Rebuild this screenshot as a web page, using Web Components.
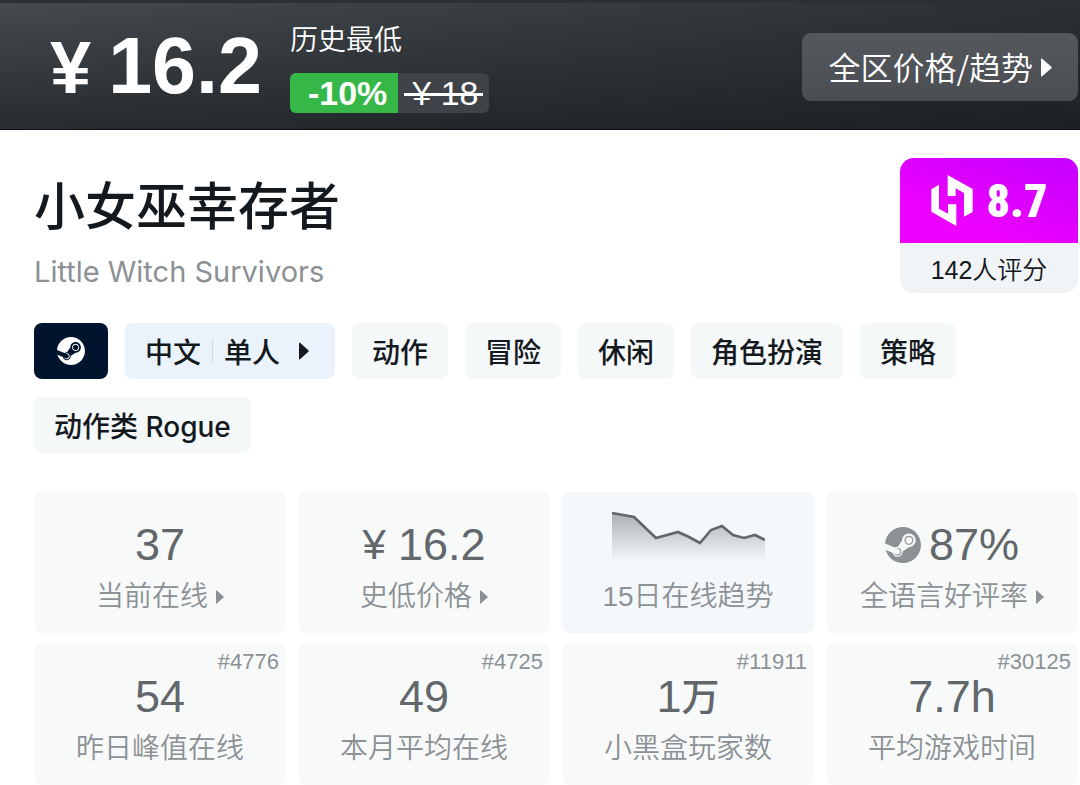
<!DOCTYPE html>
<html lang="zh-CN">
<head>
<meta charset="utf-8">
<meta name="viewport" content="width=device-width, initial-scale=1">
<title>小女巫幸存者</title>
<style>
    body {
        margin: 0;
        background: #fff;
        color: #14191e;
        font-family: "Liberation Sans", "Noto Sans CJK SC", sans-serif;
    }
</style>
</head>
<body>

<game-page>
    <price-bar slot="price" price="16.2" original="18" discount="-10%">历史最低</price-bar>
    <game-title slot="title" subtitle="Little Witch Survivors">小女巫幸存者</game-title>
    <score-badge slot="score" score="8.7">142人评分</score-badge>

    <tag-chip slot="tags" kind="platform" label="Steam"><steam-icon></steam-icon></tag-chip>
    <tag-chip slot="tags" kind="modes"><span>中文</span><i></i><span>单人</span><arrow-right></arrow-right></tag-chip>
    <tag-chip slot="tags">动作</tag-chip>
    <tag-chip slot="tags">冒险</tag-chip>
    <tag-chip slot="tags">休闲</tag-chip>
    <tag-chip slot="tags">角色扮演</tag-chip>
    <tag-chip slot="tags">策略</tag-chip>
    <tag-chip slot="tags">动作类 Rogue</tag-chip>

    <stat-card slot="stats" label="当前在线" more>37</stat-card>
    <stat-card slot="stats" label="史低价格" more><small>¥</small>16.2</stat-card>
    <stat-card slot="stats" label="15日在线趋势" active><spark-line points="0,1 22,5 44,26 66,20 77,25 88,31 99,18 110,14 121,23 132,26 143,23 153,28"></spark-line></stat-card>
    <stat-card slot="stats" label="全语言好评率" more><steam-icon></steam-icon>87%</stat-card>
    <stat-card slot="stats" label="昨日峰值在线" rank="#4776">54</stat-card>
    <stat-card slot="stats" label="本月平均在线" rank="#4725">49</stat-card>
    <stat-card slot="stats" label="小黑盒玩家数" rank="#11911">1<b>万</b></stat-card>
    <stat-card slot="stats" label="平均游戏时间" rank="#30125">7.7h</stat-card>
</game-page>

<script>
/* icons */
class SteamIcon extends HTMLElement {
    constructor() {
        super();
        let shadowRoot = this.attachShadow({mode:'open'});
        shadowRoot.innerHTML = `
        <style>
            :host { display:block; flex:none; width:28px; height:28px; }
            svg { display:block; width:100%; height:100%; fill:currentColor; }
        </style>
        <svg viewBox="0 0 24 24" aria-hidden="true">
            <path d="M11.979 0C5.678 0 .511 4.86.022 11.037l6.432 2.658c.545-.371 1.203-.59 1.912-.59.063 0 .125.004.188.006l2.861-4.142V8.91c0-2.495 2.028-4.524 4.524-4.524 2.494 0 4.524 2.031 4.524 4.527s-2.03 4.525-4.524 4.525h-.105l-4.076 2.911c0 .052.004.105.004.159 0 1.875-1.515 3.396-3.39 3.396-1.635 0-3.016-1.173-3.331-2.727L.436 15.27C1.862 20.307 6.486 24 11.979 24c6.627 0 11.999-5.373 11.999-12S18.605 0 11.979 0zM7.54 18.21l-1.473-.61c.262.543.714.999 1.314 1.25 1.297.539 2.793-.076 3.332-1.375.263-.63.264-1.319.005-1.949s-.75-1.121-1.377-1.383c-.624-.26-1.29-.249-1.878-.03l1.523.63c.956.4 1.409 1.5 1.009 2.455-.397.957-1.497 1.41-2.454 1.012H7.54zm11.415-9.303c0-1.662-1.353-3.015-3.015-3.015-1.665 0-3.015 1.353-3.015 3.015 0 1.665 1.35 3.015 3.015 3.015 1.663 0 3.015-1.35 3.015-3.015zm-5.273-.005c0-1.252 1.013-2.266 2.265-2.266 1.249 0 2.266 1.014 2.266 2.266 0 1.251-1.017 2.265-2.266 2.265-1.253 0-2.265-1.014-2.265-2.265z"/>
        </svg>
        `;
    }
}

class ArrowRight extends HTMLElement {
    constructor() {
        super();
        let shadowRoot = this.attachShadow({mode:'open'});
        shadowRoot.innerHTML = `
        <style>
            :host { display:block; flex:none; width:10px; height:18px; }
            svg { display:block; width:100%; height:100%; fill:currentColor; }
        </style>
        <svg viewBox="0 0 10 18" preserveAspectRatio="none" aria-hidden="true">
            <path d="M0 1.2Q0 0 1 .8L9.4 8.2Q10 9 9.4 9.8L1 17.2Q0 18 0 16.8z"/>
        </svg>
        `;
    }
}

/* small area chart, points are in px */
class SparkLine extends HTMLElement {
    constructor() {
        super();
        let shadowRoot = this.attachShadow({mode:'open'});
        let points = this.getAttribute('points');
        shadowRoot.innerHTML = `
        <style>
            :host { display:block; flex:none; align-self:flex-end; }
            svg { display:block; }
        </style>
        <svg width="153" height="58" viewBox="0 0 153 58" aria-hidden="true">
            <defs>
                <linearGradient id="fade" x1="0" y1="0" x2="0" y2="50" gradientUnits="userSpaceOnUse">
                    <stop offset="0" stop-color="#62676c" stop-opacity=".5"/>
                    <stop offset="1" stop-color="#62676c" stop-opacity="0"/>
                </linearGradient>
            </defs>
            <polygon points="${points} 153,50 0,50" fill="url(#fade)"/>
            <polyline points="${points}" fill="none" stroke="#62676c" stroke-width="2.6"/>
        </svg>
        `;
    }
}

/* top bar */
class PriceBar extends HTMLElement {
    constructor() {
        super();
        let shadowRoot = this.attachShadow({mode:'open'});
        shadowRoot.innerHTML = `
        <style>
            :host {
                display: flex;
                align-items: center;
                box-sizing: border-box;
                min-height: 130px;
                padding: 2px 2px 0 50px;
                border-top: 3px solid #2b3034;
                border-bottom: 1px solid #0c1014;
                background:
                    linear-gradient(90deg, rgba(16,21,25,0), rgba(16,21,25,.5)),
                    linear-gradient(#454a4e, #272c31);
                color: #fff;
            }
            .price {
                display: flex;
                align-items: baseline;
                gap: 17px;
                font-size: 79px;
                line-height: 90px;
                font-weight: bold;
            }
            .price small { font-size: 74px; }
            .low {
                display: flex;
                flex-direction: column;
                gap: 12px;
                margin-left: 28px;
            }
            .note { font-size: 28px; line-height: 40px; font-weight: 350; }
            .cut {
                display: flex;
                align-self: flex-start;
                border-radius: 6px;
                overflow: hidden;
                background: #3f4348;
                font-size: 34px;
                line-height: 40px;
            }
            .cut b { padding: 0 11px 0 18px; background: #35b848; }
            .cut del {
                position: relative;
                padding: 0 11px 0 14px;
                text-decoration: none;
            }
            .cut del::after {
                content: '';
                position: absolute;
                left: 6px;
                right: 6px;
                top: 20px;
                height: 3px;
                background: currentColor;
            }
            button {
                display: flex;
                align-items: center;
                gap: 8px;
                height: 68px;
                margin-left: auto;
                padding: 0 26px;
                border: 0;
                border-radius: 9px;
                background: linear-gradient(#55585c, #4a4d51);
                color: inherit;
                font-family: "Noto Sans CJK SC", sans-serif;
                font-size: 32px;
                line-height: 40px;
                font-weight: 350;
            }
            button span { padding-bottom: 2px; }
            arrow-right { width: 11px; height: 19px; }
        </style>
        <div class=price><small>¥</small><span>${this.getAttribute('price')}</span></div>
        <div class=low>
            <span class=note><slot></slot></span>
            <span class=cut><b>${this.getAttribute('discount')}</b><del>¥ ${this.getAttribute('original')}</del></span>
        </div>
        <button type=button><span>全区价格/趋势</span><arrow-right></arrow-right></button>
        `;
    }
}

class GameTitle extends HTMLElement {
    constructor() {
        super();
        let shadowRoot = this.attachShadow({mode:'open'});
        shadowRoot.innerHTML = `
        <style>
            :host { display: block; }
            h1 {
                margin: 0;
                font-size: 51px;
                line-height: 76px;
                font-weight: 500;
            }
            p {
                margin: 8px 0 0;
                color: #8c9196;
                font-family: Inter, sans-serif;
                font-size: 29px;
                line-height: 36px;
            }
        </style>
        <h1><slot></slot></h1>
        <p>${this.getAttribute('subtitle')}</p>
        `;
    }
}

class ScoreBadge extends HTMLElement {
    constructor() {
        super();
        let shadowRoot = this.attachShadow({mode:'open'});
        shadowRoot.innerHTML = `
        <style>
            :host {
                display: block;
                flex: none;
                width: 178px;
                border-radius: 14px;
                overflow: hidden;
                background: #f1f4f6;
                text-align: center;
            }
            .score {
                display: flex;
                align-items: center;
                justify-content: center;
                gap: 14px;
                height: 85px;
                background: linear-gradient(20deg, #ec00ff 30%, #c400ff);
                color: #fff;
                font-family: Impact, "Liberation Sans Narrow", "Roboto Condensed", "Open Sans Condensed", Roboto, sans-serif;
                font-size: 46px;
                font-weight: 900;
            }
            .count { padding-top: 4px; font-size: 25px; line-height: 46px; font-weight: 350; }
        </style>
        <div class=score>
            <svg width="42" height="51" viewBox="0 0 124 153" fill="currentColor" aria-hidden="true">
                <path d="M0 43L23 29V101L50 116V88H75V153L0 110z"/>
                <path d="M49 0L124 42V111L98 125V54L73 40V63H49z"/>
            </svg>
            <span>${this.getAttribute('score')}</span>
        </div>
        <div class=count><slot></slot></div>
        `;
    }
}

class TagChip extends HTMLElement {
    constructor() {
        super();
        let shadowRoot = this.attachShadow({mode:'open'});
        let label = this.getAttribute('label');
        shadowRoot.innerHTML = `
        <style>
            :host { display: block; }
            button {
                display: flex;
                align-items: center;
                height: 56px;
                padding: 0 20px;
                border: 0;
                border-radius: 8px;
                background: #f4f8f9;
                color: #14191e;
                font-family: Inter, "Noto Sans CJK SC", sans-serif;
                font-size: 28px;
                font-weight: 500;
                white-space: nowrap;
            }
            :host([kind=platform]) button {
                padding: 0 23px;
                background: #00152d;
                color: #fff;
            }
            :host([kind=modes]) button {
                gap: 11px;
                padding: 0 26px 0 20px;
                background: #eaf3fc;
            }
            ::slotted(i) { width: 1px; height: 24px; background: #cfd9e3; }
            ::slotted(arrow-right) { margin-left: 8px; }
        </style>
        <button type=button ${label ? `aria-label="${label}"` : ''}><slot></slot></button>
        `;
    }
}

class StatCard extends HTMLElement {
    constructor() {
        super();
        let shadowRoot = this.attachShadow({mode:'open'});
        let rank = this.getAttribute('rank');
        shadowRoot.innerHTML = `
        <style>
            :host {
                display: block;
                position: relative;
                padding: 28px 0 15px;
                border-radius: 8px;
                background: #f8faf9;
                color: #62676c;
            }
            :host([active]) { background: #f4f8fa; }
            .value {
                display: flex;
                align-items: center;
                justify-content: center;
                height: 50px;
                font-size: 45px;
                line-height: 50px;
            }
            .label {
                display: flex;
                align-items: center;
                justify-content: center;
                gap: 8px;
                margin-top: 6px;
                color: #8c9196;
                font-size: 28px;
                line-height: 42px;
                font-weight: 350;
            }
            .label arrow-right { width: 8px; height: 14px; }
            .rank {
                position: absolute;
                top: 4px;
                right: 7px;
                color: #8c9196;
                font-size: 22px;
                line-height: 28px;
            }
            ::slotted(small) { margin-right: 12px; font-size: 42px; }
            ::slotted(b) { font-size: 38px; font-weight: 500; }
            ::slotted(steam-icon) { width: 36px; height: 36px; margin-right: 8px; color: #8c9196; }
        </style>
        ${rank ? `<span class=rank>${rank}</span>` : ''}
        <div class=value><slot></slot></div>
        <div class=label>${this.getAttribute('label')}${this.hasAttribute('more') ? '<arrow-right></arrow-right>' : ''}</div>
        `;
    }
}

/* layout */
class GamePage extends HTMLElement {
    constructor() {
        super();
        let shadowRoot = this.attachShadow({mode:'open'});
        shadowRoot.innerHTML = `
        <style>
            :host { display: block; }
            main { padding: 28px 2px 0 34px; }
            .head {
                display: flex;
                align-items: flex-start;
                justify-content: space-between;
            }
            .title { padding-top: 12px; }
            .tags {
                display: flex;
                flex-wrap: wrap;
                gap: 18px 17px;
                margin-top: 30px;
            }
            .stats {
                display: grid;
                grid-template-columns: repeat(4, 1fr);
                gap: 11px 12px;
                margin-top: 39px;
            }
        </style>
        <slot name=price></slot>
        <main>
            <div class=head>
                <div class=title><slot name=title></slot></div>
                <slot name=score></slot>
            </div>
            <div class=tags><slot name=tags></slot></div>
            <div class=stats><slot name=stats></slot></div>
        </main>
        `;
    }
}

customElements.define('steam-icon', SteamIcon)
customElements.define('arrow-right', ArrowRight)
customElements.define('spark-line', SparkLine)
customElements.define('price-bar', PriceBar)
customElements.define('game-title', GameTitle)
customElements.define('score-badge', ScoreBadge)
customElements.define('tag-chip', TagChip)
customElements.define('stat-card', StatCard)
customElements.define('game-page', GamePage)
</script>
</body>
</html>
